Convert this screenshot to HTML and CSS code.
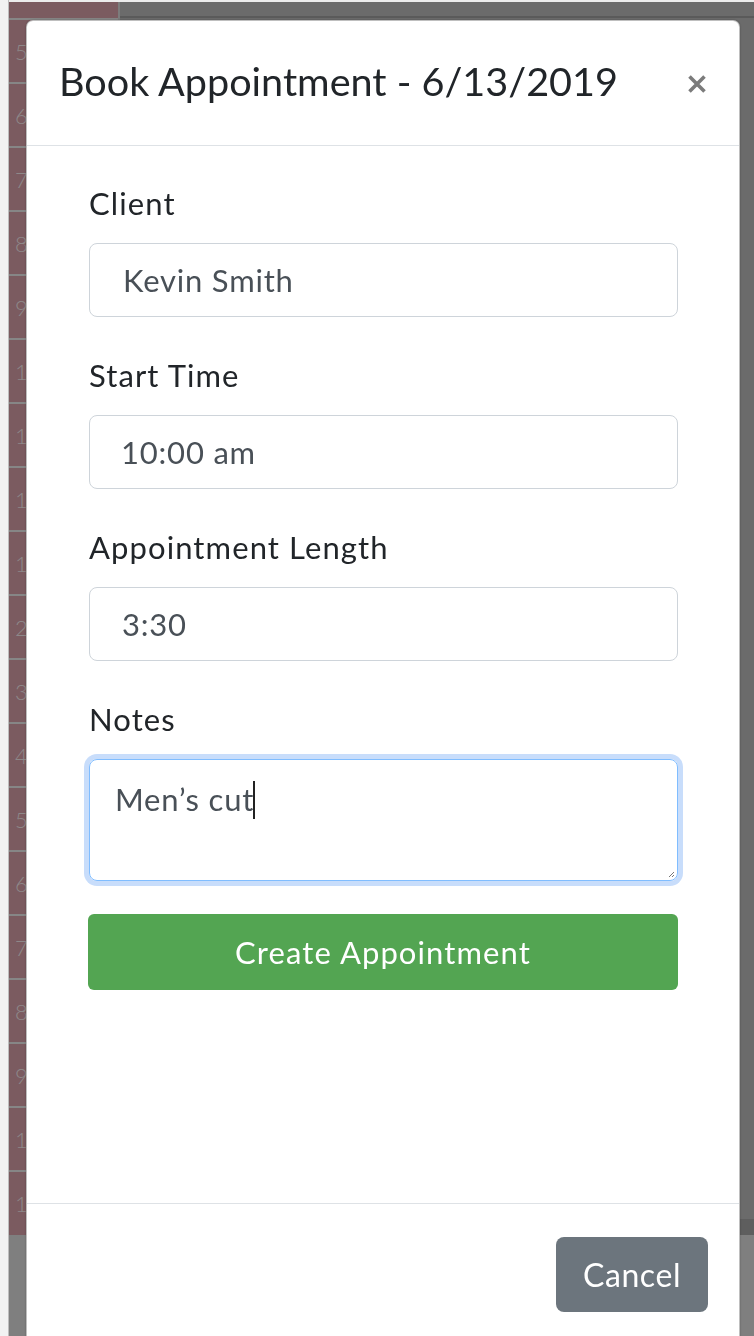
FILE: index.html
```html
<!DOCTYPE html>
<html lang="en">
<head>
<meta charset="utf-8">
<title>Book Appointment</title>
<link rel="stylesheet" href="styles.css">
</head>
<body>
<div class="screen">
  <div class="edge"></div>
  <div class="app">
    <div class="topline"></div>
    <div class="calendar">
      <div class="times">
        <div class="times-head"></div>
        <div class="slot"><span>5</span></div>
        <div class="slot"><span>6</span></div>
        <div class="slot"><span>7</span></div>
        <div class="slot"><span>8</span></div>
        <div class="slot"><span>9</span></div>
        <div class="slot"><span>10</span></div>
        <div class="slot"><span>11</span></div>
        <div class="slot"><span>12</span></div>
        <div class="slot"><span>1</span></div>
        <div class="slot"><span>2</span></div>
        <div class="slot"><span>3</span></div>
        <div class="slot"><span>4</span></div>
        <div class="slot"><span>5</span></div>
        <div class="slot"><span>6</span></div>
        <div class="slot"><span>7</span></div>
        <div class="slot"><span>8</span></div>
        <div class="slot"><span>9</span></div>
        <div class="slot"><span>10</span></div>
        <div class="slot"><span>11</span></div>
      </div>
      <div class="grid">
        <div class="grid-head"></div>
        <div class="grid-body"></div>
        <div class="scrollbar"></div>
      </div>
    </div>
    <div class="below"></div>
  </div>
</div>

<div class="overlay">
  <div class="modal">
    <div class="modal-header">
      <h5 class="modal-title">Book Appointment - 6/13/2019</h5>
      <button class="close" type="button" aria-label="Close">
        <svg width="20" height="20" viewBox="0 0 20 20"><path d="M2.5 2.5 L17.5 17.5 M17.5 2.5 L2.5 17.5" stroke="#7b7b7b" stroke-width="3.6" stroke-linecap="butt"/></svg>
      </button>
    </div>
    <div class="modal-body">
      <div class="field">
        <label class="label">Client</label>
        <div class="input client">Kevin Smith</div>
      </div>
      <div class="field">
        <label class="label">Start Time</label>
        <div class="input time">10:00 am</div>
      </div>
      <div class="field">
        <label class="label">Appointment Length</label>
        <div class="input length">3:30</div>
      </div>
      <div class="field">
        <label class="label">Notes</label>
        <div class="textarea">Men’s cut<span class="caret"></span>
          <svg class="grip" width="8" height="8" viewBox="0 0 8 8"><path d="M7 2 L2 7 M7 5 L5 7" stroke="#777" stroke-width="1"/></svg>
        </div>
      </div>
      <button class="btn-create" type="button">Create Appointment</button>
    </div>
    <div class="modal-footer">
      <button class="btn-cancel" type="button">Cancel</button>
    </div>
  </div>
</div>
</body>
</html>
```

FILE: styles.css
```css
* { box-sizing: border-box; }

html, body {
  margin: 0;
  padding: 0;
  height: 1336px;
  overflow: hidden;
  font-family: "Lato", "Noto Sans", sans-serif;
}

.screen {
  display: flex;
  height: 1336px;
  background: #f2f2f2;
}

.edge {
  width: 9px;
  background: #f2f2f2;
  border-right: 1px solid #bdbdbd;
}

.app {
  flex: 1;
  display: flex;
  flex-direction: column;
  background: #7e7e7e;
}

.topline {
  height: 2px;
  background: #ececec;
}

.calendar {
  display: flex;
  height: 1233px;
}

.times {
  width: 109px;
  background: #7b5b60;
  display: flex;
  flex-direction: column;
  overflow: hidden;
}

.times-head {
  height: 16px;
}

.slot {
  height: 64px;
  border-top: 2px solid #868686;
  display: flex;
  align-items: center;
  padding-left: 6px;
  color: #8e8889;
  font-size: 22px;
  font-weight: 300;
}

.grid {
  flex: 1;
  border-left: 2px solid #7c7c7c;
  background: #6b6b6b;
  display: flex;
  flex-direction: column;
}

.grid-head {
  height: 16px;
  border-bottom: 2px solid #5a5a5a;
}

.grid-body {
  flex: 1;
}

.scrollbar {
  height: 16px;
  background: #5e5e5e;
}

.below {
  flex: 1;
  background: #7f7f7f;
}

/* Modal */
.overlay {
  position: fixed;
  inset: 0;
  padding: 20px 14px 0 26px;
}

.modal {
  width: 714px;
  height: 1400px;
  background: #fff;
  border: 1px solid rgba(0, 0, 0, 0.25);
  border-radius: 7px;
  box-shadow: 0 0 2px rgba(0, 0, 0, 0.3);
  display: flex;
  flex-direction: column;
}

.modal-header {
  height: 125px;
  flex: none;
  border-bottom: 1px solid #dee2e6;
  display: flex;
  align-items: center;
  justify-content: space-between;
  padding: 0 32px 0 32px;
}

.modal-title {
  margin: 0;
  font-size: 39.6px;
  font-weight: 400;
  line-height: 48px;
  color: #212529;
  padding-bottom: 4px;
}

.close {
  border: 0;
  background: none;
  padding: 0;
  width: 20px;
  height: 20px;
  display: flex;
  margin-top: 2px;
}

.modal-body {
  height: 1057px;
  flex: none;
  padding: 35px 61px 0 62px;
  display: flex;
  flex-direction: column;
}

.field {
  display: flex;
  flex-direction: column;
  margin-bottom: 36px;
}

.label {
  font-size: 31px;
  line-height: 45px;
  letter-spacing: 1.1px;
  color: #212529;
  margin-bottom: 17px;
}

.input {
  height: 74px;
  border: 1px solid #ced4da;
  border-radius: 8px;
  display: flex;
  align-items: center;
  padding-left: 33px;
  font-size: 31px;
  letter-spacing: 0.8px;
  color: #495057;
}

.input.time { padding-left: 31px; }
.input.length { padding-left: 32px; }

.textarea {
  position: relative;
  height: 122px;
  border: 1px solid #80bdff;
  border-radius: 8px;
  box-shadow: 0 0 0 5px #c8ddfb;
  padding: 17px 0 0 25px;
  font-size: 31px;
  letter-spacing: 0.8px;
  line-height: 44px;
  color: #495057;
}

.caret {
  display: inline-block;
  width: 2px;
  height: 38px;
  background: #222;
  vertical-align: -8px;
  margin-left: -1px;
}

.grip {
  position: absolute;
  right: 2px;
  bottom: 2px;
}

.field:nth-child(4) {
  margin-bottom: 33px;
}

.btn-create {
  height: 76px;
  margin-left: -1px;
  border: 0;
  border-radius: 6px;
  background: #53a552;
  color: #fff;
  font-family: inherit;
  font-size: 31px;
  letter-spacing: 1.1px;
}

.modal-footer {
  border-top: 1px solid #dee2e6;
  display: flex;
  justify-content: flex-end;
  padding: 33px 31px 0 0;
}

.btn-cancel {
  width: 152px;
  height: 75px;
  border: 0;
  border-radius: 8px;
  background: #6c757d;
  color: #fff;
  font-family: inherit;
  font-size: 32px;
  letter-spacing: 0.6px;
}
```
